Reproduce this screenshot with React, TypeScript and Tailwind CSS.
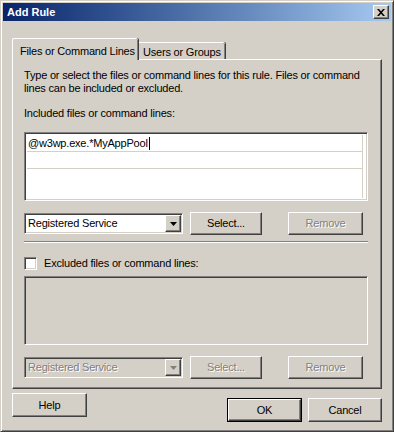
import React from "react"

const raised =
  "border border-t-white border-l-white border-r-[#404040] border-b-[#404040] shadow-[inset_-1px_-1px_0_#808080]"
const sunken =
  "border border-t-[#808080] border-l-[#808080] border-r-white border-b-white shadow-[inset_1px_1px_0_#404040,inset_-1px_-1px_0_#d4d0c8]"
const disabledText = "text-[#808080] [text-shadow:1px_1px_0_#fff]"

function Button({
  label,
  className = "",
  disabled = false,
  isDefault = false,
}: {
  label: string
  className?: string
  disabled?: boolean
  isDefault?: boolean
}) {
  if (isDefault) {
    return (
      <div className={`border border-black ${className}`}>
        <div className={`flex h-full w-full items-center justify-center ${raised}`}>
          <span>{label}</span>
        </div>
      </div>
    )
  }
  return (
    <div className={`flex items-center justify-center ${raised} ${className}`}>
      <span className={disabled ? disabledText : ""}>{label}</span>
    </div>
  )
}

function Combo({ disabled = false }: { disabled?: boolean }) {
  return (
    <div
      className={`flex h-[21px] w-[159px] items-center justify-between pr-[1px] pl-[3px] ${sunken} ${
        disabled ? "bg-[#d4d0c8]" : "bg-white"
      }`}
    >
      <span className={disabled ? disabledText : ""}>Registered Service</span>
      <div className={`flex h-[17px] w-[16px] items-center justify-center bg-[#d4d0c8] ${raised}`}>
        <svg width="7" height="4" viewBox="0 0 7 4">
          <path d="M0 0h7L3.5 4z" fill={disabled ? "#808080" : "#000"} />
        </svg>
      </div>
    </div>
  )
}

function ButtonRow({ disabled = false }: { disabled?: boolean }) {
  return (
    <div className="flex h-[23px] items-center">
      <Combo disabled={disabled} />
      <Button label="Select..." disabled={disabled} className="ml-[7px] h-[23px] w-[72px]" />
      <Button label="Remove" disabled className="ml-[26px] h-[23px] w-[75px]" />
    </div>
  )
}

export default function App() {
  return (
    <div
      className="h-[432px] w-[394px] border border-t-[#d4d0c8] border-l-[#d4d0c8] border-r-[#404040] border-b-[#404040] bg-[#d4d0c8] p-[2px] text-[11px] leading-[13px] tracking-[-0.2px] whitespace-nowrap text-black shadow-[inset_1px_1px_0_#fff,inset_-1px_-1px_0_#808080]"
      style={{ fontFamily: '"Liberation Sans", Arial, sans-serif' }}
    >
      {/* title bar */}
      <div className="flex h-[18px] items-center justify-between bg-linear-to-r from-[#0a246a] to-[#a6caf0] pr-[2px] pl-[4px]">
        <span className="font-bold tracking-normal text-white">Add Rule</span>
        <div className={`flex h-[14px] w-[16px] items-center justify-center bg-[#d4d0c8] ${raised}`}>
          <svg width="8" height="7" viewBox="0 0 8 7">
            <path d="M0 0h2l2 2.3L6 0h2L5 3.5 8 7H6L4 4.7 2 7H0l3-3.5z" fill="#000" />
          </svg>
        </div>
      </div>

      <div className="mt-[17px] px-[9px]">
        {/* tabs */}
        <div className="relative z-10 flex h-[21px] items-end">
          <div className="-mb-px flex h-[22px] w-[126px] items-start rounded-tl-[2px] rounded-tr-[2px] border-t border-l border-t-white border-l-white bg-[#d4d0c8] pt-[6px] pl-[7px] shadow-[inset_-1px_0_0_#808080,1px_0_0_#404040]">
            Files or Command Lines
          </div>
          <div className="ml-[1px] flex h-[17px] w-[86px] items-start rounded-tr-[2px] border-t border-t-white bg-[#d4d0c8] pt-[3px] pl-[4px] shadow-[inset_-1px_0_0_#808080,1px_0_0_#404040]">
            Users or Groups
          </div>
        </div>

        {/* tab panel */}
        <div className={`h-[330px] bg-[#d4d0c8] pt-[9px] pl-[11px] ${raised}`}>
          <p>
            Type or select the files or command lines for this rule. Files or command
            <br />
            lines can be included or excluded.
          </p>
          <p className="mt-[12px]">Included files or command lines:</p>

          <div className={`mt-[12px] h-[69px] w-[344px] bg-white p-[2px] ${sunken}`}>
            <div className="h-full w-[336px] border-r border-r-[#d4d0c8]">
              <div className="flex h-[17px] items-center border-b border-b-[#d4d0c8] pl-[1px]">
                <span>@w3wp.exe.*MyAppPool</span>
                <span className="ml-[1px] inline-block h-[13px] w-px bg-black" />
              </div>
              <div className="h-[17px] border-b border-b-[#d4d0c8]" />
            </div>
          </div>

          <div className="mt-[11px]">
            <ButtonRow />
          </div>

          <div className="mt-[6px] h-[2px] w-[344px] border-t border-b border-t-[#808080] border-b-white" />

          <div className="mt-[14px] flex h-[13px] items-center">
            <div className={`h-[13px] w-[13px] bg-white ${sunken}`} />
            <span className="ml-[7px]">Excluded files or command lines:</span>
          </div>

          <div className={`mt-[6px] h-[69px] w-[344px] bg-[#d4d0c8] ${sunken}`} />

          <div className="mt-[11px]">
            <ButtonRow disabled />
          </div>
        </div>

        {/* footer */}
        <div className="flex items-start justify-between">
          <Button label="Help" className="mt-[4px] h-[24px] w-[75px]" />
          <div className="mt-[9px] flex gap-[6px]">
            <Button label="OK" isDefault className="h-[24px] w-[75px]" />
            <Button label="Cancel" className="h-[24px] w-[74px]" />
          </div>
        </div>
      </div>
    </div>
  )
}
